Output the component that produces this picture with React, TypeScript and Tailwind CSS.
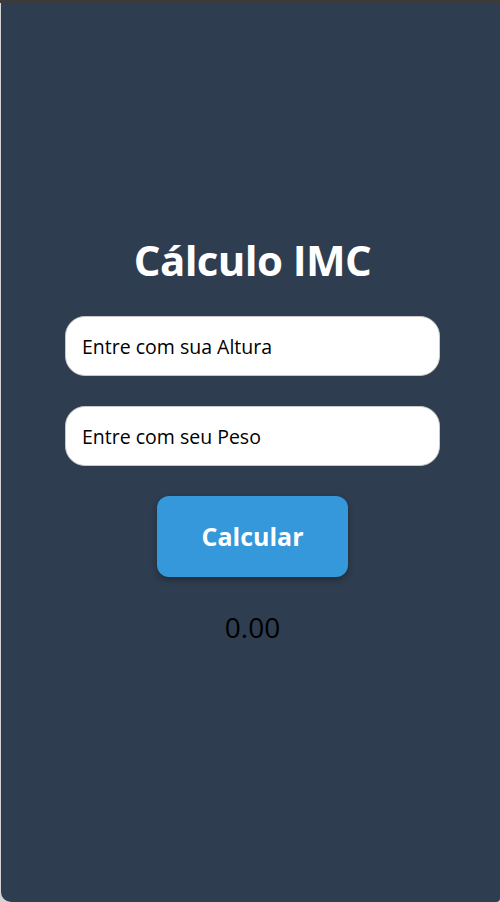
import React from "react";

export default function App() {
  return (
    <div className="w-[500px] h-[902px] bg-[#d4d4d4] flex flex-col" style={{ fontFamily: '"Open Sans", "Noto Sans", sans-serif' }}>
      <div className="h-[3px] bg-[#3b3b3b] shrink-0" />
      <div className="flex-1 ml-[1px] pl-[4px] bg-[#2e3d4f] rounded-bl-[10px] rounded-br-[4px] flex flex-col items-center pt-[229px]">
        <h1 className="text-[42px] leading-[56px] font-bold text-white tracking-[-0.6px]">Cálculo IMC</h1>
        <div className="mt-[28px] w-[375px] flex flex-col gap-[30px]">
          <input
            className="h-[60px] w-full rounded-[20px] bg-white border border-[#c8c8c8] px-[16px] text-[19.5px] text-black placeholder:text-black outline-none"
            placeholder="Entre com sua Altura"
          />
          <input
            className="h-[60px] w-full rounded-[20px] bg-white border border-[#c8c8c8] px-[16px] text-[19.5px] text-black placeholder:text-black outline-none"
            placeholder="Entre com seu Peso"
          />
        </div>
        <button className="mt-[30px] w-[191px] h-[81px] rounded-[12px] bg-[#3498db] text-white text-[25px] font-bold shadow-[0_3px_6px_rgba(0,0,0,0.3)]">
          Calcular
        </button>
        <div className="mt-[32px] text-[28px] leading-[36px] text-black">0.00</div>
      </div>
    </div>
  );
}
